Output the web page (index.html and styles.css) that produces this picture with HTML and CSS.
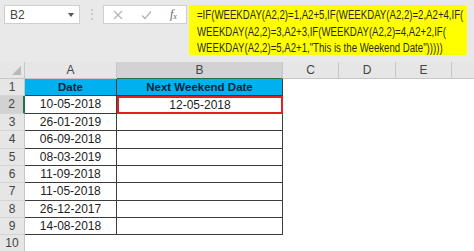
FILE: index.html
```html
<!DOCTYPE html>
<html lang="en">
<head>
  <meta charset="UTF-8">
  <title>Next Weekend Date</title>
  <link rel="stylesheet" href="styles.css">
</head>
<body>
  <div class="toolbar">
    <div class="namebox">
      <span>B2</span>
      <span class="caret"></span>
    </div>
    <div class="grip">⋮</div>
    <div class="fxbox">
      <svg width="10" height="10" viewBox="0 0 10 10"><path d="M1 1L9 9M9 1L1 9" stroke="#b3b3b3" stroke-width="1.2" fill="none"/></svg>
      <svg width="11" height="10" viewBox="0 0 11 10"><path d="M1 5.5L4 8.5L10 1.5" stroke="#b3b3b3" stroke-width="1.2" fill="none"/></svg>
      <span class="fx">f<sub>x</sub></span>
    </div>
    <div class="formula">
      <div class="formula-text">
        =IF(WEEKDAY(A2,2)=1,A2+5,IF(WEEKDAY(A2,2)=2,A2+4,IF(<br>
        WEEKDAY(A2,2)=3,A2+3,IF(WEEKDAY(A2,2)=4,A2+2,IF(<br>
        WEEKDAY(A2,2)=5,A2+1,"This is the Weekend Date")))))
      </div>
    </div>
  </div>

  <div class="sheet">
    <!-- column headers -->
    <div class="corner"><span class="tri"></span></div>
    <div class="colhead">A</div>
    <div class="colhead sel">B</div>
    <div class="colhead">C</div>
    <div class="colhead">D</div>
    <div class="colhead">E</div>
    <div class="colhead last"></div>

    <div class="rowhead">1</div>
    <div class="cell t head">Date</div>
    <div class="cell t head">Next Weekend Date</div>
    <div class="cell"></div><div class="cell"></div><div class="cell"></div><div class="cell"></div>

    <div class="rowhead sel">2</div>
    <div class="cell t">10-05-2018</div>
    <div class="cell t active">12-05-2018</div>
    <div class="cell"></div><div class="cell"></div><div class="cell"></div><div class="cell"></div>

    <div class="rowhead">3</div>
    <div class="cell t">26-01-2019</div>
    <div class="cell t"></div>
    <div class="cell"></div><div class="cell"></div><div class="cell"></div><div class="cell"></div>

    <div class="rowhead">4</div>
    <div class="cell t">06-09-2018</div>
    <div class="cell t"></div>
    <div class="cell"></div><div class="cell"></div><div class="cell"></div><div class="cell"></div>

    <div class="rowhead">5</div>
    <div class="cell t">08-03-2019</div>
    <div class="cell t"></div>
    <div class="cell"></div><div class="cell"></div><div class="cell"></div><div class="cell"></div>

    <div class="rowhead">6</div>
    <div class="cell t">11-09-2018</div>
    <div class="cell t"></div>
    <div class="cell"></div><div class="cell"></div><div class="cell"></div><div class="cell"></div>

    <div class="rowhead">7</div>
    <div class="cell t">11-05-2018</div>
    <div class="cell t"></div>
    <div class="cell"></div><div class="cell"></div><div class="cell"></div><div class="cell"></div>

    <div class="rowhead">8</div>
    <div class="cell t">26-12-2017</div>
    <div class="cell t"></div>
    <div class="cell"></div><div class="cell"></div><div class="cell"></div><div class="cell"></div>

    <div class="rowhead">9</div>
    <div class="cell t">14-08-2018</div>
    <div class="cell t"></div>
    <div class="cell"></div><div class="cell"></div><div class="cell"></div><div class="cell"></div>

    <div class="rowhead">10</div>
    <div class="cell"></div><div class="cell"></div>
    <div class="cell"></div><div class="cell"></div><div class="cell"></div><div class="cell"></div>
  </div>
</body>
</html>
```

FILE: styles.css
```css
* {
  box-sizing: border-box;
}

body {
  margin: 0;
  width: 474px;
  height: 251px;
  overflow: hidden;
  background: #fff;
  font-family: "Liberation Sans", Arial, sans-serif;
  color: #333;
}

/* formula bar */
.toolbar {
  height: 62px;
  background: #e9e9e9;
  display: flex;
  align-items: flex-start;
  padding: 5px 0 0 4px;
}

.namebox {
  width: 76px;
  height: 19px;
  background: #fff;
  border: 1px solid #cfcfcf;
  display: flex;
  align-items: center;
  justify-content: space-between;
  padding: 0 5px 0 5px;
  font-size: 12px;
  color: #444;
}

.caret {
  width: 0;
  height: 0;
  border-left: 3px solid transparent;
  border-right: 3px solid transparent;
  border-top: 4px solid #555;
}

.grip {
  width: 23px;
  height: 19px;
  text-align: center;
  color: #bcbcbc;
  font-size: 12px;
  line-height: 19px;
}

.fxbox {
  width: 84px;
  height: 19px;
  background: #fff;
  border: 1px solid #cfcfcf;
  display: flex;
  align-items: center;
  gap: 18px;
  padding-left: 9px;
}

.fx {
  font-family: "Liberation Serif", serif;
  font-style: italic;
  font-size: 12px;
  color: #666;
}

.fx sub {
  font-size: 8px;
  vertical-align: -1px;
}

.formula {
  margin-left: 2px;
  width: 278px;
  height: 50px;
  background: #ffff00;
  padding: 2px 0 0 8px;
  overflow: hidden;
}

/* Calibri is narrower than anything installed, so squeeze it */
.formula-text {
  font-size: 12.5px;
  line-height: 16.5px;
  color: #2a2a1e;
  white-space: nowrap;
  transform: scaleX(0.77);
  transform-origin: left top;
}

/* grid */
.sheet {
  display: grid;
  grid-template-columns: 25px 92px 166px 56px 57px 56px 22px;
  grid-template-rows: 17px 17px 18px 17px 18px 17px 17px 18px 17px 17px 17px;
  font-size: 12px;
}

.corner {
  background: #e6e6e6;
  border-right: 1px solid #c6c6c6;
  border-bottom: 1px solid #c6c6c6;
  position: relative;
}

.tri {
  position: absolute;
  right: 3px;
  bottom: 3px;
  width: 0;
  height: 0;
  border-left: 9px solid transparent;
  border-bottom: 9px solid #b9b9b9;
}

.colhead {
  background: #e6e6e6;
  border-right: 1px solid #c6c6c6;
  border-bottom: 1px solid #c6c6c6;
  text-align: center;
  line-height: 16px;
  color: #444;
}

.colhead.sel {
  background: #d2d2d2;
  border-bottom: 1px solid #217346;
}

.colhead.last {
  border-right: none;
}

.rowhead {
  background: #e6e6e6;
  border-right: 1px solid #c6c6c6;
  border-bottom: 1px solid #d4d4d4;
  text-align: center;
  line-height: 17px;
  color: #444;
}

.rowhead.sel {
  background: #d2d2d2;
  border-right: 2px solid #217346;
}

.cell {
  background: #fff;
}

.cell.t {
  border-right: 1px solid #3c3c3c;
  border-bottom: 1px solid #3c3c3c;
  text-align: center;
  line-height: 17px;
  color: #222;
}

.cell.head {
  background: #00b0f0;
  font-weight: bold;
  font-size: 11.5px;
  color: #14213d;
}

.cell.active {
  border: 2px solid #e31e24;
  line-height: 14px;
}
```
